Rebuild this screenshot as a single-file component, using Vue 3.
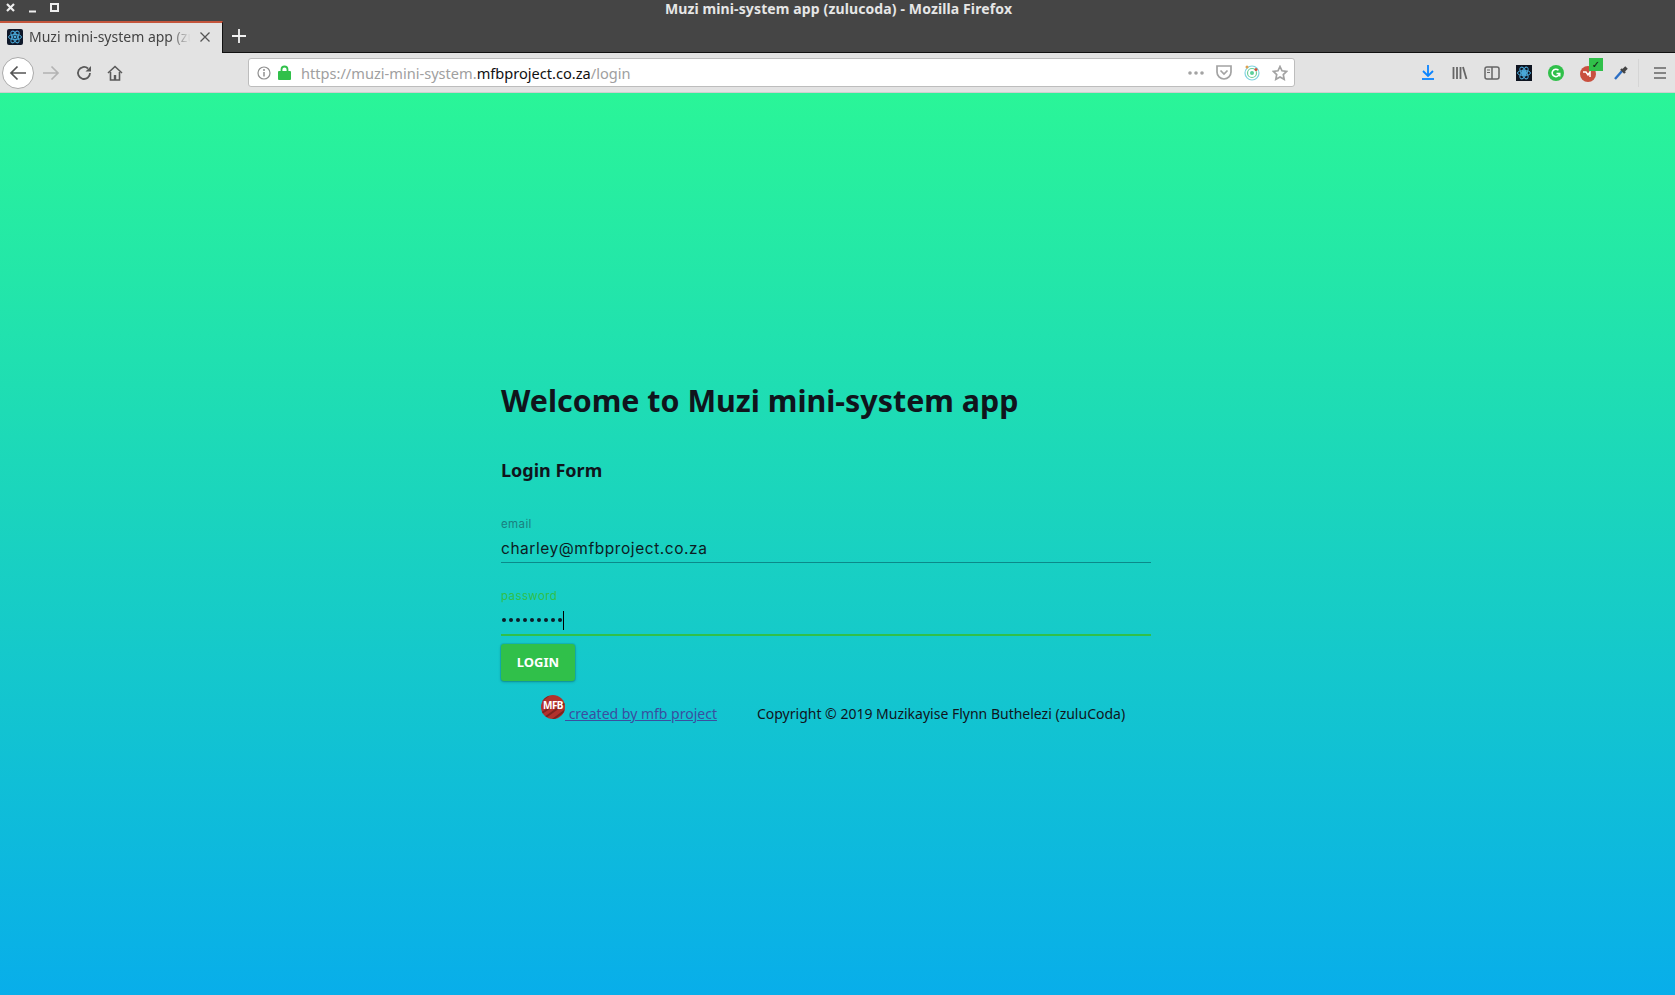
<template>
  <div class="window">
    <header class="titlebar">
      <div class="winbtns">
        <svg width="11" height="11" viewBox="0 0 11 11"><path d="M2 2l7 7M9 2l-7 7" stroke="#eee" stroke-width="2.2" fill="none"/></svg>
        <svg width="11" height="11" viewBox="0 0 11 11"><path d="M2 9.5h7" stroke="#eee" stroke-width="2" fill="none"/></svg>
        <svg width="11" height="11" viewBox="0 0 11 11"><rect x="2" y="2" width="7" height="7" stroke="#eee" stroke-width="2" fill="none"/></svg>
      </div>
      <div class="wintitle">Muzi mini-system app (zulucoda) - Mozilla Firefox</div>
    </header>
    <div class="tabstrip">
      <div class="tab">
        <svg class="favicon" width="16" height="16" viewBox="0 0 16 16">
          <rect width="16" height="16" rx="2" fill="#10192b"/>
          <g fill="none" stroke="#4aa8d8" stroke-width="1">
            <ellipse cx="8" cy="8" rx="6.5" ry="2.6"/>
            <ellipse cx="8" cy="8" rx="6.5" ry="2.6" transform="rotate(60 8 8)"/>
            <ellipse cx="8" cy="8" rx="6.5" ry="2.6" transform="rotate(120 8 8)"/>
          </g>
          <circle cx="8" cy="8" r="1.4" fill="#4aa8d8"/>
        </svg>
        <span class="tabtext">Muzi mini-system app (zu</span>
        <svg class="tabclose" width="12" height="12" viewBox="0 0 12 12"><path d="M1.5 1.5l9 9M10.5 1.5l-9 9" stroke="#555" stroke-width="1.3" fill="none"/></svg>
      </div>
      <svg class="newtab" width="14" height="14" viewBox="0 0 14 14"><path d="M7 0v14M0 7h14" stroke="#f2f2f2" stroke-width="1.8"/></svg>
    </div>
    <nav class="toolbar">
      <div class="backbtn">
        <svg width="18" height="16" viewBox="0 0 18 16"><path d="M17 8H2M8.500 1.500L2 8l6.500 6.500" stroke="#555" stroke-width="1.700" fill="none"/></svg>
      </div>
      <svg class="tool forward" width="18" height="16" viewBox="0 0 18 16"><path d="M1 8h15M9.500 1.500L16 8l-6.500 6.500" stroke="#b3b3b3" stroke-width="1.700" fill="none"/></svg>
      <svg class="tool reload" width="16" height="16" viewBox="0 0 16 16"><path d="M14 8a6 6 0 1 1-2-4.500" stroke="#5a5a5a" stroke-width="1.800" fill="none"/><path d="M15 1v5.500H9.500z" fill="#5a5a5a"/></svg>
      <svg class="tool home" width="16" height="16" viewBox="0 0 16 16"><path d="M1 8l7-6.500L15 8" stroke="#5a5a5a" stroke-width="1.600" fill="none"/><path d="M3.500 7v8h9V7" stroke="#5a5a5a" stroke-width="1.600" fill="none"/><rect x="6.800" y="10" width="2.400" height="5" fill="#5a5a5a"/></svg>
      <div class="urlbar">
        <svg width="14" height="14" viewBox="0 0 14 14"><circle cx="7" cy="7" r="6" stroke="#8f8f8f" stroke-width="1.200" fill="none"/><path d="M7 6v4.500" stroke="#8f8f8f" stroke-width="1.500"/><circle cx="7" cy="3.900" r="1" fill="#8f8f8f"/></svg>
        <svg class="lock" width="13" height="15" viewBox="0 0 13 15"><path d="M3.500 7V4.500a3 3 0 0 1 6 0V7" stroke="#30c04a" stroke-width="1.800" fill="none"/><rect y="6" width="13" height="9" rx="1" fill="#30c04a"/></svg>
        <div class="url"><span class="dim">https://muzi-mini-system.</span><span class="domain">mfbproject.co.za</span><span class="dim">/login</span></div>
        <svg class="dots" width="16" height="4" viewBox="0 0 16 4"><g fill="#a3a3a3"><circle cx="2" cy="2" r="1.800"/><circle cx="8" cy="2" r="1.800"/><circle cx="14" cy="2" r="1.800"/></g></svg>
        <svg class="pocket" width="16" height="15" viewBox="0 0 16 15"><path d="M1 1h14v6a7 7 0 0 1-14 0z" stroke="#a3a3a3" stroke-width="1.700" fill="none"/><path d="M4.500 5.500L8 9l3.500-3.500" stroke="#a3a3a3" stroke-width="1.700" fill="none"/></svg>
        <svg class="radar" width="16" height="16" viewBox="0 0 16 16"><circle cx="8" cy="8" r="7" stroke="#7fd3e0" stroke-width="1.200" fill="none"/><circle cx="8" cy="8" r="4.500" stroke="#6fcf97" stroke-width="1.200" fill="none"/><circle cx="8" cy="8" r="2" fill="#5ccf9a"/><circle cx="3" cy="2" r="1.500" fill="#e0a050"/><circle cx="12" cy="4.500" r="1.500" fill="#d0503a"/></svg>
        <svg class="star" width="16" height="16" viewBox="0 0 16 16"><path d="M8 1.500l2 4.300 4.700.600-3.400 3.200.9 4.700L8 12l-4.200 2.300.9-4.700L1.300 6.400 6 5.800z" stroke="#a3a3a3" stroke-width="1.700" fill="none"/></svg>
      </div>
      <div class="rightbar">
        <svg class="tool-r dl" width="14" height="15" viewBox="0 0 14 15"><path d="M7 0v10M2 6l5 5 5-5" stroke="#0a84ff" stroke-width="1.800" fill="none"/><path d="M1 14h12" stroke="#0a84ff" stroke-width="1.800"/></svg>
        <svg class="tool-r lib" width="16" height="14" viewBox="0 0 16 14"><path d="M1.500 1v12M5 1v12M8.500 1v12M11 1l3.500 12" stroke="#666" stroke-width="1.800" fill="none"/></svg>
        <svg class="tool-r side" width="16" height="14" viewBox="0 0 16 14"><rect x="1" y="1" width="14" height="12" rx="2" stroke="#666" stroke-width="1.500" fill="none"/><path d="M8 1v12" stroke="#666" stroke-width="1.500"/><path d="M3 4h3M3 6.500h3" stroke="#666" stroke-width="1.200"/></svg>
        <svg class="tool-r react" width="16" height="16" viewBox="0 0 16 16">
          <rect width="16" height="16" fill="#0e1420"/>
          <g fill="none" stroke="#4aa8d8" stroke-width="1"><ellipse cx="8" cy="8" rx="6.500" ry="2.600"/><ellipse cx="8" cy="8" rx="6.500" ry="2.600" transform="rotate(60 8 8)"/><ellipse cx="8" cy="8" rx="6.500" ry="2.600" transform="rotate(120 8 8)"/></g>
          <rect x="6" y="6" width="4" height="4" fill="#4aa8d8"/>
        </svg>
        <svg class="tool-r gram" width="16" height="16" viewBox="0 0 16 16"><circle cx="8" cy="8" r="8" fill="#30c04a"/><path d="M11.500 8.500a3.700 3.700 0 1 1-1-3.200" stroke="#fff" stroke-width="1.600" fill="none"/><path d="M8.500 8.500h3.300v3" stroke="#fff" stroke-width="1.400" fill="none"/></svg>
        <div class="ublock">
          <svg width="16" height="16" viewBox="0 0 16 16"><circle cx="8" cy="8" r="8" fill="#c9503f"/><path d="M3 6h3l2 3 2-3v5" stroke="#fff" stroke-width="1.500" fill="none"/></svg>
          <span class="badge">✓</span>
        </div>
        <svg class="tool-r drop" width="16" height="16" viewBox="0 0 16 16"><path d="M2 14L9 6" stroke="#2c6fc4" stroke-width="2.400"/><path d="M8 4l4 4" stroke="#444" stroke-width="2.400"/><path d="M10.500 5.500l3-3" stroke="#444" stroke-width="3.600"/></svg>
        <div class="sep"></div>
        <svg class="tool-r ham" width="12" height="12" viewBox="0 0 12 12"><path d="M0 1h12M0 6h12M0 11h12" stroke="#666" stroke-width="1.600"/></svg>
      </div>
    </nav>
    <main class="page">
      <section class="content">
        <h1>Welcome to Muzi mini-system app</h1>
        <h2>Login Form</h2>
        <form class="form" @submit.prevent>
          <label class="field">
            <span class="lab">email</span>
            <span class="val email">charley@mfbproject.co.za</span>
          </label>
          <label class="field active">
            <span class="lab">password</span>
            <span class="val pw"><span class="dotsrow"><i v-for="n in 9" :key="n"></i></span><span class="caret"></span></span>
          </label>
          <button class="login" type="button">LOGIN</button>
        </form>
        <footer class="foot">
          <svg class="logo" width="24" height="24" viewBox="0 0 24 24">
            <defs><clipPath id="logoclip"><circle cx="12" cy="12" r="12"/></clipPath></defs>
            <circle cx="12" cy="12" r="12" fill="#b2312c"/>
            <g clip-path="url(#logoclip)" stroke="#7d2320" stroke-width="2" fill="none">
              <path d="M0 6L8 0M16 0L24 -4M2 24L24 8M10 26L26 14M-2 20L10 12"/>
            </g>
            <text x="12" y="14" text-anchor="middle" class="logotext">MFB</text>
          </svg>
          <a class="credit" href="#" @click.prevent>&nbsp;created by mfb project</a>
          <span class="copy">Copyright © 2019 Muzikayise Flynn Buthelezi (zuluCoda)</span>
        </footer>
      </section>
    </main>
  </div>
</template>

<script setup>
</script>

<style>
html, body { margin: 0; padding: 0; background: #fff; }
</style>

<style scoped>
.window { width: 1675px; height: 995px; display: flex; flex-direction: column; overflow: hidden; font-family: "Noto Sans", sans-serif; }
.titlebar { height: 21px; background: #454545; display: flex; align-items: flex-start; position: relative; }
.winbtns { display: flex; gap: 11px; padding: 2px 0 0 5px; width: 60px; }
.wintitle { flex: 1; margin-left: -60px; text-align: center; color: #e6e6e6; font-size: 14px; font-weight: 700; line-height: 17px; letter-spacing: 0.12px; padding-right: 3px; }
.tabstrip { height: 32px; background: #454545; display: flex; align-items: stretch; box-sizing: border-box; border-bottom: 1px solid #111; }
.tab { width: 223px; height: 32px; box-sizing: border-box; background: #e3e3e3; border-top: 2px solid #c4553c; border-right: 1px solid #111; display: flex; align-items: flex-start; padding: 4px 10px 0 7px; color: #444; font-size: 14px; line-height: 20px; }
.favicon { flex: none; margin-top: 2px; }
.tabtext { margin-left: 6px; width: 165px; white-space: nowrap; -webkit-mask-image: linear-gradient(to right, #000 85%, transparent 98%); mask-image: linear-gradient(to right, #000 85%, transparent 98%); }
.tabclose { margin-left: 5px; margin-top: 4px; flex: none; }
.newtab { margin: 8px 0 0 9px; }
.toolbar { height: 40px; box-sizing: border-box; background: #e3e3e3; border-bottom: 1px solid #cfcfcf; display: flex; align-items: center; padding-left: 2px; }
.backbtn { width: 32px; height: 32px; box-sizing: border-box; border-radius: 50%; background: #fff; border: 1px solid #aaa; display: flex; align-items: center; justify-content: center; flex: none; }
.tool { flex: none; }
.forward { margin-left: 8px; }
.reload { margin-left: 16px; }
.home { margin-left: 15px; }
.urlbar { margin-left: 125px; width: 1047px; height: 29px; box-sizing: border-box; background: #fff; border: 1px solid #bdbdbd; border-radius: 3px; display: flex; align-items: center; padding-left: 8px; flex: none; }
.lock { margin-left: 7px; flex: none; }
.url { margin-left: 10px; flex: 1; font-size: 14.6px; white-space: nowrap; }
.dim { color: #a0a0a0; }
.domain { color: #111; }
.dots { margin-right: 12px; }
.pocket { margin-right: 12px; }
.radar { margin-right: 12px; }
.star { margin-right: 6px; }
.rightbar { flex: 1; display: flex; align-items: center; padding-left: 126px; }
.tool-r { flex: none; }
.lib { margin-left: 17px; }
.side { margin-left: 16px; }
.react { margin-left: 16px; }
.gram { margin-left: 16px; }
.ublock { margin-left: 16px; position: relative; width: 16px; height: 16px; }
.badge { position: absolute; left: 9px; top: -7px; width: 14px; height: 13px; background: #30c04a; color: #111; font-size: 10px; line-height: 13px; text-align: center; font-family: "DejaVu Sans", sans-serif; }
.drop { margin-left: 17px; }
.sep { width: 1px; height: 28px; background: #d5d5d5; margin-left: 9px; }
.ham { margin-left: 15px; }
.page { flex: 1; background: linear-gradient(to bottom, #2af598, #08aeea); }
.content { width: 650px; margin-left: 501px; padding-top: 288px; }
h1 { margin: 0; font-size: 30.4px; line-height: 40px; font-weight: 700; color: #10141c; }
h2 { margin: 36px 0 0; font-size: 18px; line-height: 26px; font-weight: 700; color: #10141c; }
.form { margin-top: 34px; display: flex; flex-direction: column; align-items: flex-start; }
.field { display: block; width: 100%; border-bottom: 1px solid #0b8a8a; height: 46px; box-sizing: border-box; }
.field.active { border-bottom: 2px solid #30c04a; margin-top: 26px; height: 47px; }
.lab { display: block; font-family: "Inter", sans-serif; font-size: 11.5px; line-height: 14px; color: #1a7f80; letter-spacing: 0.4px; }
.active .lab { color: #30c04a; }
.val { display: flex; align-items: center; height: 26px; margin-top: 4px; font-family: "Inter", sans-serif; font-size: 15.5px; color: #0c1c24; letter-spacing: 0.55px; }
.dotsrow { display: flex; gap: 3px; padding-left: 1px; }
.dotsrow i { width: 4px; height: 4px; border-radius: 50%; background: #0c1c28; display: block; }
.caret { width: 1px; height: 19px; background: #000; margin-left: 1px; }
.login { margin-top: 8px; width: 74px; height: 37px; border: 0; border-radius: 3px; background: #30c04a; color: #fff; font-family: "Noto Sans", sans-serif; font-weight: 700; font-size: 13px; box-shadow: 0 1px 3px rgba(0,0,0,.25), 0 0 0 1px rgba(0,0,0,.08); padding: 0 0 2px; }
.foot { display: flex; align-items: flex-end; margin: 14px 0 0 40px; font-size: 14px; line-height: 20px; color: #10141c; }
.logo { flex: none; margin-bottom: 5px; }
.logotext { font: 700 10px "Noto Sans", sans-serif; fill: #fff; letter-spacing: -0.6px; }
.credit { color: #3a4fa0; text-decoration: underline; }
.copy { margin-left: 40px; }
</style>
